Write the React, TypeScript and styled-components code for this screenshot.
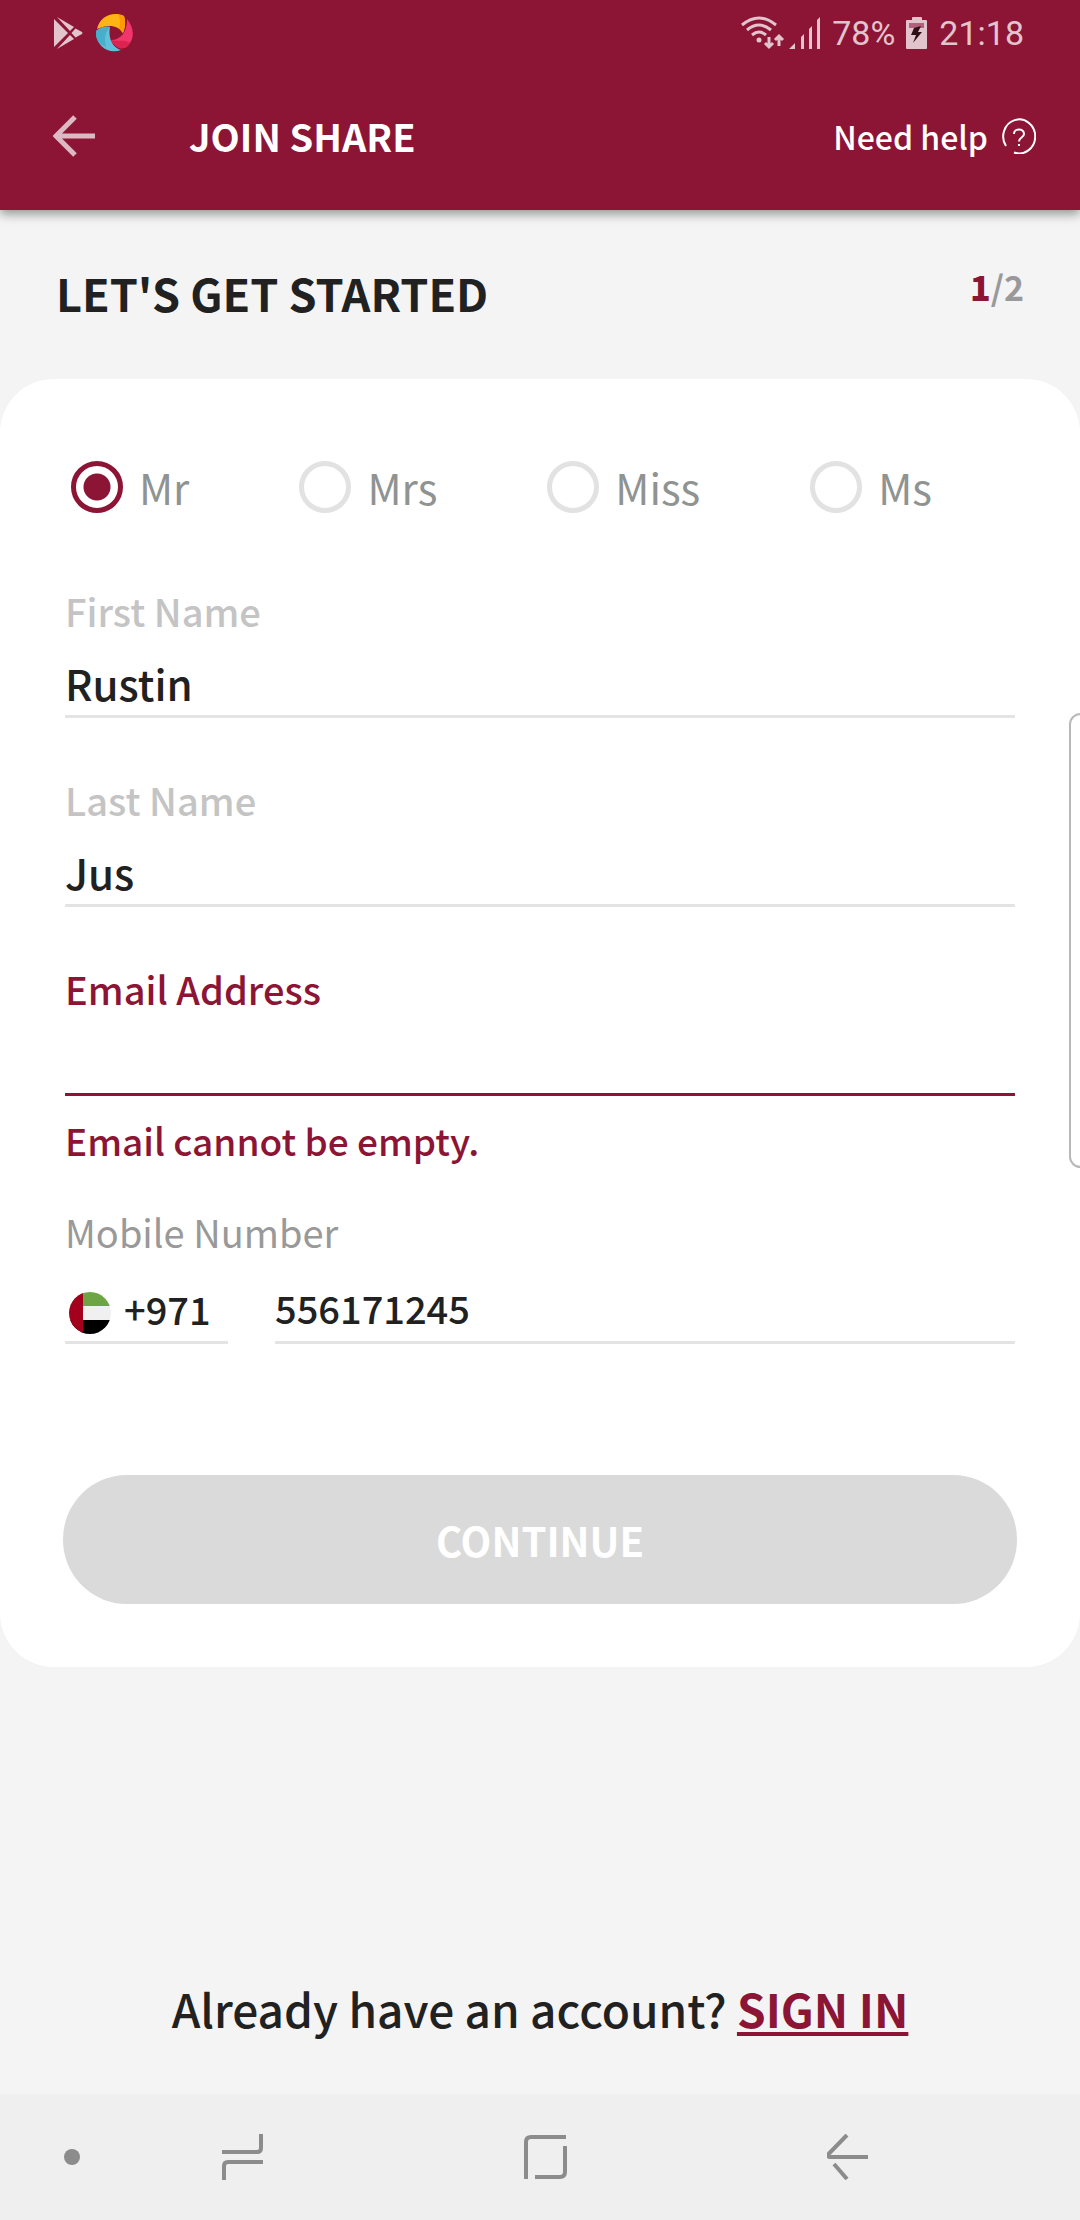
import React from 'react';
import styled, { createGlobalStyle } from 'styled-components';

const brand = '#8c1535';
const ink = '#212121';

const GlobalStyle = createGlobalStyle`
  * { box-sizing: border-box; }
  body { margin: 0; background: #f4f4f4; }
  body, button, input, select {
    font-family: 'Noto Sans CJK SC', 'Noto Sans', sans-serif;
    font-weight: 500;
  }
  button { border: 0; padding: 0; background: none; display: flex; cursor: pointer; }
  svg { display: block; flex: none; }
`;

const Screen = styled.div`
  min-height: 100vh;
  display: flex;
  flex-direction: column;
  color: ${ink};
`;

const TopBar = styled.header`
  background: ${brand};
  color: #fff;
  box-shadow: 0 4px 10px rgba(0, 0, 0, 0.4);
`;

const StatusBar = styled.div`
  height: 66px;
  padding: 0 56px 0 54px;
  display: flex;
  align-items: center;
  justify-content: space-between;
  color: #e2c4cd;
  font: 400 34px/40px Roboto, sans-serif;
`;

const StatusGroup = styled.div<{ $gap: number }>`
  display: flex;
  align-items: center;
  gap: ${(p) => p.$gap}px;
`;

const AppBar = styled.div`
  height: 144px;
  padding: 0 44px 4px 53px;
  display: flex;
  align-items: center;
`;

const AppTitle = styled.h1`
  flex: 1;
  margin: 0 0 0 94px;
  font-size: 38px;
  line-height: 48px;
  font-weight: 700;
`;

const HelpButton = styled.button`
  align-items: center;
  gap: 14px;
  color: #fff;
  font-size: 32px;
  line-height: 48px;
`;

const Intro = styled.div`
  padding: 57px 56px 60px;
  display: flex;
  justify-content: space-between;
  align-items: flex-start;
`;

const Heading = styled.h2`
  margin: 0;
  font-size: 45px;
  line-height: 52px;
  font-weight: 700;
`;

const Steps = styled.p`
  margin: 0;
  color: #999;
  font-size: 34px;
  line-height: 40px;
  font-weight: 700;
  b { color: ${brand}; }
`;

const Card = styled.form`
  padding: 80px 63px 63px;
  border-radius: 54px;
  background: #fff;
`;

const Titles = styled.fieldset`
  margin: 0;
  border: 0;
  padding: 0 8px;
  display: flex;
  gap: 110px;
`;

const TitleOption = styled.label`
  display: flex;
  align-items: center;
  gap: 16px;
  color: #8f9391;
  font-size: 42px;
  line-height: 56px;
  font-weight: 400;
`;

const Radio = styled.input`
  appearance: none;
  width: 52px;
  height: 52px;
  margin: 0;
  border: 5px solid #e2e2e2;
  border-radius: 50%;
  &:checked {
    border-color: ${brand};
    background: radial-gradient(circle, ${brand} 13px, #fff 14px);
  }
`;

const Fields = styled.div`
  padding: 68px 2px 0;
`;

const Field = styled.div`
  height: 189px;
  display: flex;
  flex-direction: column;
`;

const Label = styled.label<{ $tone?: string; $light?: boolean }>`
  color: ${(p) => p.$tone || '#c4c4c4'};
  font-size: 38px;
  line-height: 56px;
  font-weight: ${(p) => (p.$light ? 400 : 500)};
`;

const Input = styled.input<{ $error?: boolean }>`
  width: 100%;
  height: 79px;
  padding: 10px 0 0;
  border: 0;
  border-bottom: 3px solid ${(p) => (p.$error ? brand : '#e4e4e4')};
  border-radius: 0;
  outline: 0;
  background: transparent;
  color: ${ink};
  font-size: 42px;
`;

const ErrorText = styled.p`
  margin: 16px 0 36px;
  color: ${brand};
  font-size: 37px;
  line-height: 56px;
`;

const PhoneRow = styled.div`
  display: flex;
  gap: 47px;
`;

const CodeBox = styled.div`
  width: 163px;
  height: 84px;
  padding: 24px 0 0 4px;
  border-bottom: 3px solid #e4e4e4;
  display: flex;
  align-items: center;
  gap: 13px;
`;

const CodeSelect = styled.select`
  appearance: none;
  flex: 1;
  min-width: 0;
  padding: 0 0 8px;
  border: 0;
  outline: 0;
  background: transparent;
  color: ${ink};
  font-size: 38px;
  line-height: 48px;
`;

const PhoneInput = styled(Input)`
  flex: 1;
  width: auto;
  height: 84px;
  padding-top: 14px;
  font-size: 38px;
`;

const Continue = styled.button`
  width: 100%;
  height: 129px;
  margin-top: 131px;
  border-radius: 64px;
  background: #dadada;
  color: #fff;
  align-items: center;
  justify-content: center;
  font-size: 40px;
  font-weight: 700;
`;

const SignIn = styled.p`
  margin: auto 0 0;
  padding: 0 40px 58px;
  text-align: center;
  font-size: 46px;
  line-height: 56px;
  a {
    color: ${brand};
    font-weight: 700;
    text-decoration-thickness: 4px;
    text-underline-offset: 4px;
  }
`;

const NavBar = styled.nav`
  height: 126px;
  background: #efefef;
  display: flex;
  align-items: center;
  padding: 0 211px 0 64px;
`;

const NavButtons = styled.div`
  flex: 1;
  margin-left: 142px;
  display: flex;
  justify-content: space-between;
`;

const EdgeHandle = styled.div`
  position: fixed;
  top: 713px;
  right: -12px;
  width: 23px;
  height: 455px;
  border: 2px solid #b8b8b8;
  border-radius: 13px;
  background: #fff;
`;

const PlayIcon = () => (
  <svg width="30" height="32" viewBox="0 0 30 32" fill="#e2c4cd">
    <path d="M0 2 14 16 0 30ZM3 0 20 10 16 14ZM21.500 11.500 28 15Q29 16 28 17L21.500 20.500 17.500 16ZM3 32 16 18 20 22Z" />
  </svg>
);

const SwirlIcon = () => (
  <svg width="38" height="38" viewBox="0 0 38 38">
    <path d="M1 15C4 2 17-3 28 2C30 8 29 14 27 19C22 11 12 10 1 15Z" fill="#fdb515" />
    <path d="M22 0 28 2C30 8 29 14 27 19L23 14C25 9 24 4 22 0Z" fill="#fe9a05" />
    <path d="M31 5C37 12 39 22 34 29C31 34 27 35 24 34C20 33 16 29 15 26C25 26 31 18 31 5Z" fill="#f2356b" />
    <path d="M15 26C22 28 29 25 34 29C31 34 27 35 24 34C20 33 16 29 15 26Z" fill="#dc2450" />
    <path d="M0 17C4 13 9 12 14 13C12 24 16 33 25 36C12 41-1 31 0 17Z" fill="#61c0da" />
    <path d="M0 17C4 13 9 12 14 13C9 18 8 25 10 33C3 30-1 24 0 17Z" fill="#47aecb" />
  </svg>
);

const WifiIcon = () => (
  <svg width="44" height="34" viewBox="0 0 44 34" fill="none" stroke="#e2c4cd" strokeWidth="3">
    <path d="M1 9Q18-5 35 9M6 14Q18 4 30 14M11 19Q18 13 25 19" />
    <circle cx="18" cy="24" r="2.500" fill="#e2c4cd" stroke="none" />
    <path d="M28 21V31M24 27 28 31 32 27M38 30V20M34 24 38 20 42 24" />
  </svg>
);

const SignalIcon = () => (
  <svg width="32" height="32" viewBox="0 0 32 32" fill="#e2c4cd">
    <path d="M0 32 6 26V32ZM12 20 15 17V32H12ZM20 12 23 9V32H20ZM28 3 31 0V32H28Z" />
  </svg>
);

const BatteryIcon = () => (
  <svg width="22" height="32" viewBox="0 0 22 32">
    <path d="M6 3V1Q6 0 7 0H15Q16 0 16 1V3H20Q21 3 21 4V31Q21 32 20 32H1Q0 32 0 31V4Q0 3 1 3Z" fill="#e2c4cd" />
    <path d="M3 6H18V11H3Z" fill="#b4607b" />
    <path d="M8 11 15 9 12 15H16L7 26 10 18H5Z" fill="#2c1018" />
  </svg>
);

const BackIcon = () => (
  <svg width="42" height="42" viewBox="0 0 42 42" fill="none" stroke="#ddb9c4" strokeWidth="5">
    <path d="M22 2 3 21 22 40M3 21H42" />
  </svg>
);

const HelpIcon = () => (
  <svg width="34" height="36" viewBox="0 0 34 36" fill="none" stroke="#fff" strokeWidth="2">
    <path d="M4 28A16 17 0 1 1 12 34.500" />
    <path d="M12 16C12 10 22 10 22 16C22 20 17 19 17 23.500M17 26V28" />
  </svg>
);

const FlagIcon = () => (
  <svg width="42" height="42" viewBox="0 0 42 42">
    <clipPath id="flag"><circle cx="21" cy="21" r="21" /></clipPath>
    <g clipPath="url(#flag)">
      <path d="M0 0H42V14H0Z" fill="#6da544" />
      <path d="M0 14H42V28H0Z" fill="#f0f0f0" />
      <path d="M0 28H42V42H0Z" fill="#000" />
      <path d="M0 0H14V42H0Z" fill="#a2001d" />
    </g>
  </svg>
);

const navStroke = { fill: 'none', stroke: '#8c8c8c', strokeWidth: 4 };

const RecentsIcon = () => (
  <svg width="42" height="46" viewBox="0 0 42 46" {...navStroke}>
    <path d="M0 18H35Q39 18 39 14V0M2 46V32Q2 28 6 28H41" />
  </svg>
);

const HomeIcon = () => (
  <svg width="44" height="46" viewBox="0 0 44 46" {...navStroke}>
    <path d="M2 45V8Q2 3 7 3H42M41 12V38Q41 43 36 43H11" />
  </svg>
);

const NavBackIcon = () => (
  <svg width="42" height="46" viewBox="0 0 42 46" {...navStroke}>
    <path d="M20 1 2 19.500Q0 23 3 23H41M7 30 20 45" />
  </svg>
);

const titles = ['Mr', 'Mrs', 'Miss', 'Ms'];

export default function App() {
  return (
    <Screen>
      <GlobalStyle />
      <TopBar>
        <StatusBar>
          <StatusGroup $gap={12}>
            <PlayIcon />
            <SwirlIcon />
          </StatusGroup>
          <StatusGroup $gap={11}>
            <StatusGroup $gap={4}>
              <WifiIcon />
              <SignalIcon />
            </StatusGroup>
            <span>78%</span>
            <BatteryIcon />
            <span>21:18</span>
          </StatusGroup>
        </StatusBar>
        <AppBar>
          <button type="button" aria-label="Back"><BackIcon /></button>
          <AppTitle>JOIN SHARE</AppTitle>
          <HelpButton type="button">Need help <HelpIcon /></HelpButton>
        </AppBar>
      </TopBar>

      <Intro>
        <Heading>LET'S GET STARTED</Heading>
        <Steps><b>1</b>/2</Steps>
      </Intro>

      <Card onSubmit={(e) => e.preventDefault()}>
        <Titles aria-label="Title">
          {titles.map((t) => (
            <TitleOption key={t}>
              <Radio type="radio" name="title" value={t} defaultChecked={t === 'Mr'} />
              {t}
            </TitleOption>
          ))}
        </Titles>

        <Fields>
          <Field>
            <Label htmlFor="first">First Name</Label>
            <Input id="first" defaultValue="Rustin" />
          </Field>
          <Field>
            <Label htmlFor="last">Last Name</Label>
            <Input id="last" defaultValue="Jus" />
          </Field>
          <Label htmlFor="email" $tone={brand}>Email Address</Label>
          <Input id="email" type="email" $error aria-invalid aria-describedby="email-error" />
          <ErrorText id="email-error">Email cannot be empty.</ErrorText>
          <Label htmlFor="phone" $tone="#999" $light>Mobile Number</Label>
          <PhoneRow>
            <CodeBox>
              <FlagIcon />
              <CodeSelect aria-label="Country code" defaultValue="+971">
                <option>+971</option>
              </CodeSelect>
            </CodeBox>
            <PhoneInput id="phone" type="tel" defaultValue="556171245" />
          </PhoneRow>
        </Fields>

        <Continue type="submit">CONTINUE</Continue>
      </Card>

      <SignIn>Already have an account? <a href="#sign-in">SIGN IN</a></SignIn>

      <NavBar>
        <svg width="16" height="16" viewBox="0 0 16 16"><circle cx="8" cy="8" r="8" fill="#8c8c8c" /></svg>
        <NavButtons>
          <button type="button" aria-label="Recent apps"><RecentsIcon /></button>
          <button type="button" aria-label="Home"><HomeIcon /></button>
          <button type="button" aria-label="Back"><NavBackIcon /></button>
        </NavButtons>
      </NavBar>
      <EdgeHandle />
    </Screen>
  );
}
